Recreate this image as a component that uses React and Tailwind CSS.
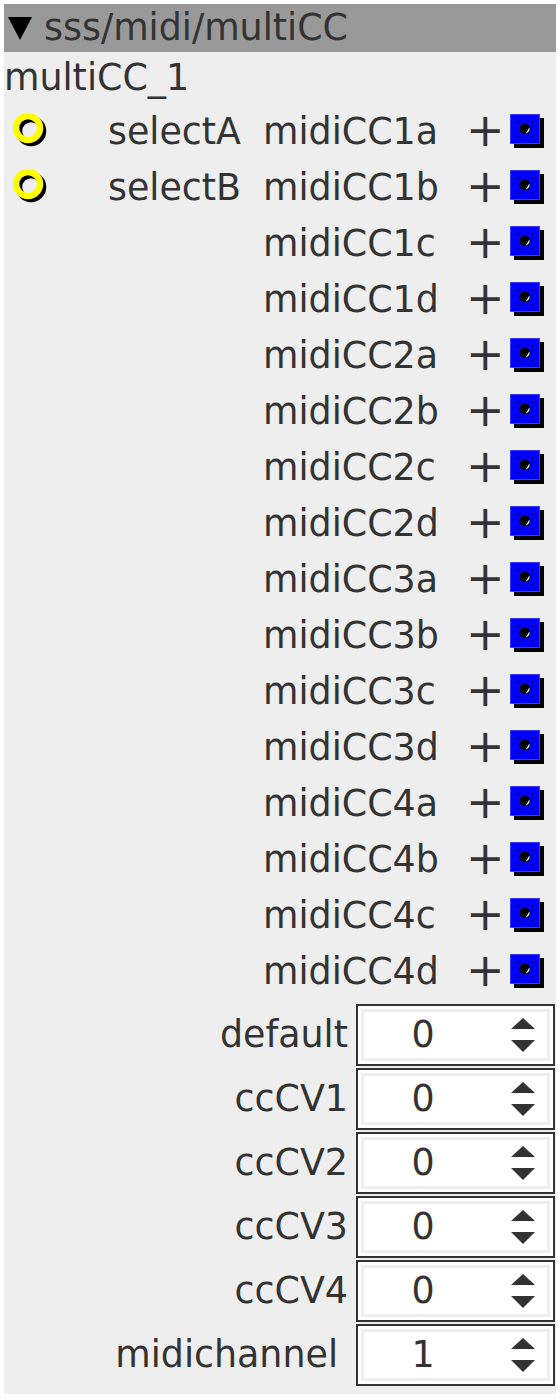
import React from "react";

const outputs = [
  "midiCC1a","midiCC1b","midiCC1c","midiCC1d",
  "midiCC2a","midiCC2b","midiCC2c","midiCC2d",
  "midiCC3a","midiCC3b","midiCC3c","midiCC3d",
  "midiCC4a","midiCC4b","midiCC4c","midiCC4d",
];
const inputs = ["selectA", "selectB"];
const params = [
  { label: "default", value: "0" },
  { label: "ccCV1", value: "0" },
  { label: "ccCV2", value: "0" },
  { label: "ccCV3", value: "0" },
  { label: "ccCV4", value: "0" },
  { label: "midichannel", value: "1", extra: true },
];

function Ring() {
  return (
    <svg width="40" height="40" viewBox="0 0 40 40" className="block">
      <circle cx="18" cy="19" r="12" fill="none" stroke="#000" strokeWidth="6.5" />
      <circle cx="15" cy="16" r="12" fill="none" stroke="#ffff00" strokeWidth="6.5" />
    </svg>
  );
}

function Port() {
  return (
    <svg width="36" height="36" viewBox="0 0 36 36" className="block">
      <rect x="4" y="4" width="30" height="30" fill="#000" />
      <rect x="0.5" y="0.5" width="29" height="29" fill="#0000ff" stroke="#3a3aff" />
      <circle cx="15" cy="15" r="5.5" fill="#000" />
      <path d="M15.5 19.5 A5 5 0 0 0 19.5 13.5 Z" fill="#fff" />
      <circle cx="8" cy="8" r="1" fill="#000" />
      <circle cx="22" cy="8" r="1" fill="#000" />
      <circle cx="8" cy="22" r="1" fill="#000" />
      <circle cx="22" cy="22" r="1" fill="#000" />
    </svg>
  );
}

function Spinner() {
  return (
    <div className="flex flex-col items-center gap-[11px]">
      <svg width="24" height="11" viewBox="0 0 24 11" className="block">
        <polygon points="12,0 24,11 0,11" fill="#333" />
      </svg>
      <svg width="24" height="12" viewBox="0 0 24 12" className="block">
        <polygon points="0,0 24,0 12,12" fill="#333" />
      </svg>
    </div>
  );
}

export default function App() {
  return (
    <div
      className="bg-white p-1 w-[560px]"
      style={{ fontFamily: '"DejaVu Sans", Verdana, sans-serif' }}
    >
      <div className="w-[552px] bg-[#eeeeee] text-[#333333] text-[36.4px] pb-2">
        <div className="h-12 bg-[#999999] flex items-center">
          <svg width="24" height="24" viewBox="0 0 24 24" className="block ml-1 mr-3">
            <polygon points="0,1 24,1 12,24" fill="#000" />
          </svg>
          <span className="leading-none">sss/midi/multiCC</span>
        </div>
        <div className="h-[52px] flex items-center leading-none">multiCC_1</div>
        <div className="flex flex-col">
          {outputs.map((name, i) => (
            <div key={name} className="h-14 grid grid-cols-[104px_155px_203px_44px_1fr] items-center leading-none">
              <div className="pl-[9px]">{inputs[i] ? <Ring /> : null}</div>
              <div>{inputs[i] || ""}</div>
              <div>{name}</div>
              <div className="text-[46px] leading-none mb-[4px]">+</div>
              <div><Port /></div>
            </div>
          ))}
        </div>
        <div className="flex flex-col gap-[2px] mt-1">
          {params.map((p) => (
            <div key={p.label} className="h-[62px] flex items-center">
              <div className={`flex-1 text-right leading-none ${p.extra ? "pr-[18px]" : "pr-[8px]"}`}>
                {p.label}
              </div>
              <div className="w-[199px] h-[62px] border-2 border-[#333333] bg-white mr-[1px] p-[3px] box-border">
                <div className="w-full h-full bg-white border-[3px] border-[#eeeeee] flex items-center box-border">
                  <div className="flex-1 text-center leading-none pr-[21px]">{p.value}</div>
                  <div className="w-[44px] flex justify-center pr-[4px]">
                    <Spinner />
                  </div>
                </div>
              </div>
            </div>
          ))}
        </div>
      </div>
    </div>
  );
}
